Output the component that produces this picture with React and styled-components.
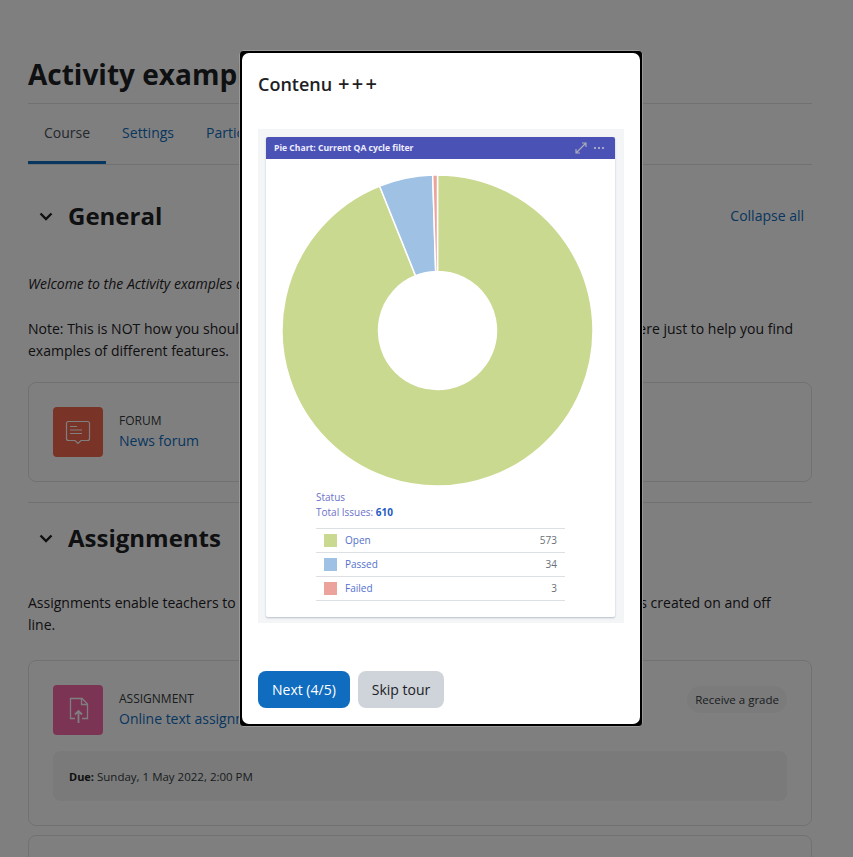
import React from "react";
import styled, { createGlobalStyle } from "styled-components";

const Global = createGlobalStyle`
  html, body { margin: 0; padding: 0; overflow: hidden; background: #fff; }
  * { box-sizing: border-box; }
  body { font-family: "Open Sans", "Noto Sans", "Liberation Sans", sans-serif; font-size: 14px; color: #1d2125; line-height: 22px; }
`;

const Page = styled.div`
  position: relative;
  width: 853px;
  height: 857px;
  overflow: hidden;
  background: #fff;
`;
const Content = styled.main`
  display: flex;
  flex-direction: column;
  padding: 48px 41px 0 28px;
`;
const Title = styled.h1`
  margin: 0;
  height: 56px;
  font-size: 28px;
  line-height: 53px;
  font-weight: 700;
  border-bottom: 1px solid #dee2e6;
  white-space: nowrap;
`;
const Tabs = styled.nav`
  display: flex;
  height: 61px;
  border-bottom: 1px solid #dee2e6;
`;
const Tab = styled.a`
  height: 60px;
  padding: 18px 16px 0;
  font-size: 14px;
  color: ${p => (p.$active ? "#495057" : "#0f6cbf")};
  border-bottom: 3px solid ${p => (p.$active ? "#0f6cbf" : "transparent")};
`;
const SectionHead = styled.div`
  display: flex;
  align-items: center;
  height: 36px;
  margin-top: ${p => p.$top}px;
  padding-left: 10px;
`;
const Chevron = styled.svg`
  width: 16px;
  height: 16px;
  margin-right: 14px;
  flex: none;
`;
const SectionTitle = styled.h2`
  margin: 0;
  font-size: 24px;
  font-weight: 700;
  flex: 1;
`;
const Collapse = styled.a`
  color: #0f6cbf;
  font-size: 14px;
  margin-right: 8px;
`;
const Para = styled.p`
  margin: ${p => p.$top}px 0 0;
  white-space: nowrap;
  font-style: ${p => (p.$italic ? "italic" : "normal")};
`;
const Card = styled.div`
  border: 1px solid #dee2e6;
  border-radius: 8px;
  padding: 24px;
  margin-top: ${p => p.$top}px;
  height: ${p => p.$h}px;
  flex: none;
`;
const ActivityRow = styled.div`
  display: flex;
  align-items: center;
  height: 50px;
`;
const IconTile = styled.svg`
  width: 50px;
  height: 50px;
  border-radius: 4px;
  background: ${p => p.$bg};
  margin-right: 16px;
  flex: none;
`;
const ActivityText = styled.div`
  display: flex;
  flex-direction: column;
  flex: 1;
`;
const ActivityType = styled.span`
  font-size: 12px;
  line-height: 18px;
  color: #343a40;
  text-transform: uppercase;
`;
const ActivityName = styled.a`
  font-size: 14px;
  line-height: 22px;
  color: #0f6cbf;
`;
const Pill = styled.span`
  align-self: flex-start;
  margin-top: 1px;
  font-size: 11.5px;
  line-height: 27px;
  height: 27px;
  padding: 0 8px;
  border-radius: 14px;
  background: #f6f7f8;
  color: #343a40;
`;
const DueBox = styled.div`
  margin-top: 16px;
  height: 50px;
  padding: 1px 16px 0;
  border-radius: 8px;
  background: #f2f4f3;
  display: flex;
  align-items: center;
  font-size: 11.5px;
  color: #343a40;
  b { margin-right: 3px; color: #1d2125; font-size: 11px; }
`;
const Rule = styled.hr`
  margin: 20px 0 0;
  border: 0;
  border-top: 1px solid #dee2e6;
`;

const Overlay = styled.div`
  position: absolute;
  inset: 0;
  background: rgba(0, 0, 0, 0.5);
`;
const Modal = styled.div`
  position: absolute;
  left: 239px;
  top: 50px;
  width: 404px;
  height: 677px;
  background: #000;
  border: 1px solid #999;
  border-radius: 4px;
  padding: 2px;
  display: flex;
`;
const ModalBody = styled.div`
  flex: 1;
  background: #fff;
  border-radius: 7px;
  padding: 0 16px;
  display: flex;
  flex-direction: column;
`;
const ModalTitle = styled.h3`
  margin: 19px 0 0;
  font-size: 18px;
  line-height: 24px;
  font-weight: 600;
  height: 57px;
`;
const Plus = styled.span`
  font-size: 20px;
  font-weight: 600;
  letter-spacing: 2.4px;
  margin-left: 1px;
`;
const Shot = styled.div`
  width: 366px;
  height: 494px;
  background: #f4f5f7;
  padding: 8px 8px 0 8px;
  display: flex;
  flex-direction: column;
  flex: none;
`;
const ChartCard = styled.div`
  width: 349px;
  height: 480px;
  background: #fff;
  border-radius: 2px;
  box-shadow: 0 1px 2px rgba(9, 30, 66, 0.25);
  display: flex;
  flex-direction: column;
`;
const ChartHeader = styled.div`
  height: 22px;
  background: #4a52b6;
  border-radius: 2px 2px 0 0;
  color: #eef;
  display: flex;
  align-items: center;
  padding: 0 8px;
  font-size: 8.6px;
  font-weight: 700;
  justify-content: space-between;
`;
const HeaderIcons = styled.svg`
  width: 32px;
  height: 14px;
`;
const Donut = styled.svg`
  width: 349px;
  height: 329px;
  flex: none;
  display: block;
`;
const Legend = styled.div`
  padding: 2px 50px 0;
  font-size: 10px;
  line-height: 15px;
  color: #6a72c8;
`;
const Total = styled.div`
  margin-bottom: 8px;
  b { color: #1f5cc4; font-weight: 700; }
`;
const LegendRow = styled.div`
  height: 24px;
  display: flex;
  align-items: center;
  border-top: 1px solid #dcdfe4;
  padding: 0 8px;
  &:last-child { border-bottom: 1px solid #dcdfe4; height: 25px; }
`;
const Swatch = styled.span`
  width: 13px;
  height: 13px;
  background: ${p => p.$c};
  margin-right: 8px;
`;
const LegendLabel = styled.span`
  flex: 1;
  color: #5470cc;
  font-size: 10px;
`;
const LegendVal = styled.span`
  color: #6b6f76;
  font-size: 10px;
`;
const Buttons = styled.div`
  display: flex;
  gap: 8px;
  margin-top: 48px;
`;
const Btn = styled.button`
  height: 37px;
  border: 0;
  border-radius: 8px;
  padding: 0 14px;
  font: inherit;
  font-size: 14px;
  background: ${p => (p.$primary ? "#0f6cbf" : "#ced4da")};
  color: ${p => (p.$primary ? "#fff" : "#1d2125")};
`;

const CX = 171.5;
const CY = 171.5;
const polar = (r, deg) => {
  const a = ((deg - 90) * Math.PI) / 180;
  return [CX + r * Math.cos(a), CY + r * Math.sin(a)];
};
const slice = (a0, a1, R = 155.5, r = 59) => {
  const [x0, y0] = polar(R, a0);
  const [x1, y1] = polar(R, a1);
  const [x2, y2] = polar(r, a1);
  const [x3, y3] = polar(r, a0);
  const large = a1 - a0 > 180 ? 1 : 0;
  return `M${x0} ${y0}A${R} ${R} 0 ${large} 1 ${x1} ${y1}L${x2} ${y2}A${r} ${r} 0 ${large} 0 ${x3} ${y3}Z`;
};

const data = [
  { label: "Open", val: 573, color: "#c9d98f" },
  { label: "Passed", val: 34, color: "#9fc1e4" },
  { label: "Failed", val: 3, color: "#eba39c" },
];
const total = 610;

function PieSlices() {
  let a = 0;
  return data.map(d => {
    const s = a;
    a += (d.val / total) * 360;
    return <path key={d.label} d={slice(s, a)} fill={d.color} stroke="#fff" strokeWidth="1.5" />;
  });
}

const Chev = () => (
  <Chevron viewBox="0 0 16 16">
    <path d="M2.500 5.500 8 11l5.500-5.500" fill="none" stroke="#1d2125" strokeWidth="2.400" />
  </Chevron>
);

export default function App() {
  return (
    <Page>
      <Global />
      <Content>
        <Title>Activity examples</Title>
        <Tabs>
          <Tab $active>Course</Tab>
          <Tab>Settings</Tab>
          <Tab>Participants</Tab>
        </Tabs>
        <SectionHead $top={33}>
          <Chev />
          <SectionTitle>General</SectionTitle>
          <Collapse>Collapse all</Collapse>
        </SectionHead>
        <Para $top={39} $italic>Welcome to the Activity examples course</Para>
        <Para $top={23}>
          Note: This is NOT how you should really organise your course in real life. These activities are here just to help you find
          <br />
          examples of different features.
        </Para>
        <Card $top={20} $h={100}>
          <ActivityRow>
            <IconTile $bg="#f4674e" viewBox="0 0 50 50" fill="none" stroke="#fff" strokeWidth="1.2">
              <path d="M15.500 14.500h19a2 2 0 0 1 2 2v15a2 2 0 0 1-2 2h-6.500l-3 3-3-3h-6.500a2 2 0 0 1-2-2v-15a2 2 0 0 1 2-2z" />
              <path d="M17 19.500h7M17 23h12M17 26.500h12" />
            </IconTile>
            <ActivityText>
              <ActivityType>Forum</ActivityType>
              <ActivityName>News forum</ActivityName>
            </ActivityText>
          </ActivityRow>
        </Card>
        <Rule />
        <SectionHead $top={17}>
          <Chev />
          <SectionTitle>Assignments</SectionTitle>
        </SectionHead>
        <Para $top={36}>
          Assignments enable teachers to review, and give comments on uploaded files and assignments created on and off
          <br />
          line.
        </Para>
        <Card $top={24} $h={166}>
          <ActivityRow>
            <IconTile $bg="#f868ab" viewBox="0 0 50 50" fill="none" stroke="#fff" strokeWidth="1.300">
              <path d="M22 33.500h-4.500v-20H29l5.500 5.500v14.500H29" />
              <path d="M28.500 13.500v6h6" />
              <path d="M25.500 38V26M22 29.500l3.500-3.500 3.500 3.500" strokeWidth="1.800" />
            </IconTile>
            <ActivityText>
              <ActivityType>Assignment</ActivityType>
              <ActivityName>Online text assignment</ActivityName>
            </ActivityText>
            <Pill>Receive a grade</Pill>
          </ActivityRow>
          <DueBox><b>Due:</b> Sunday, 1 May 2022, 2:00 PM</DueBox>
        </Card>
        <Card $top={9} $h={100} />
      </Content>
      <Overlay />
      <Modal>
        <ModalBody>
          <ModalTitle>Contenu <Plus>+++</Plus></ModalTitle>
          <Shot>
            <ChartCard>
              <ChartHeader>
                <span>Pie Chart: Current QA cycle filter</span>
                <HeaderIcons viewBox="0 0 32 14">
                  <path d="M1 12 11 2M7 2h4v4M1 8v4h4" fill="none" stroke="#aab" strokeWidth="1.200" />
                  <circle cx="20" cy="7" r="1.100" fill="#bbc" />
                  <circle cx="24" cy="7" r="1.100" fill="#bbc" />
                  <circle cx="28" cy="7" r="1.100" fill="#bbc" />
                </HeaderIcons>
              </ChartHeader>
              <Donut viewBox="0 0 349 329"><PieSlices /></Donut>
              <Legend>
                <div>Status</div>
                <Total>Total Issues: <b>610</b></Total>
                {data.map(d => (
                  <LegendRow key={d.label}>
                    <Swatch $c={d.color} />
                    <LegendLabel>{d.label}</LegendLabel>
                    <LegendVal>{d.val}</LegendVal>
                  </LegendRow>
                ))}
              </Legend>
            </ChartCard>
          </Shot>
          <Buttons>
            <Btn $primary>Next (4/5)</Btn>
            <Btn>Skip tour</Btn>
          </Buttons>
        </ModalBody>
      </Modal>
    </Page>
  );
}
